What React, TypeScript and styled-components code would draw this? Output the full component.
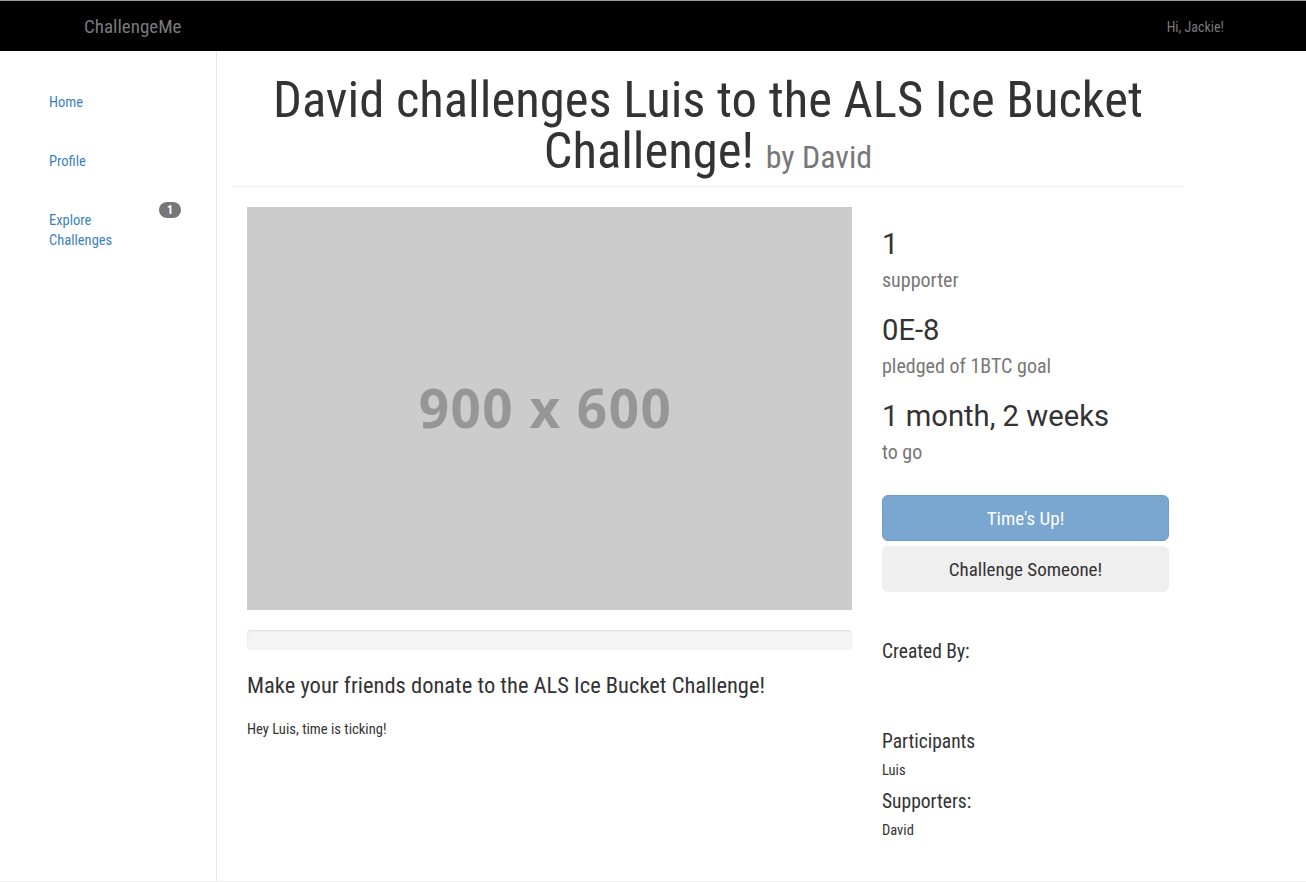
import React from "react";
import styled, { createGlobalStyle } from "styled-components";

const Global = createGlobalStyle`
  html, body { margin: 0; padding: 0; background: #fff; }
  body {
    font-family: "Roboto", "Liberation Sans", sans-serif;
    font-stretch: condensed;
    font-size: 14px;
    line-height: 20px;
    color: #333;
  }
  * { box-sizing: border-box; }
`;

const Navbar = styled.header`
  height: 51px;
  background: #000;
  border-top: 1px solid #9a9a9a;
  display: flex;
  align-items: center;
  justify-content: space-between;
  padding: 0 82px 0 84px;
`;

const Brand = styled.a`
  color: #7a7a7a;
  font-size: 19px;
  line-height: 20px;
  text-decoration: none;
  margin-top: 2px;
`;

const Greeting = styled.span`
  color: #7a7a7a;
  font-size: 14px;
  margin-top: 1px;
`;

const Body = styled.div`
  display: flex;
  height: 831px;
  border-bottom: 1px solid #eee;
`;

const Sidebar = styled.nav`
  width: 217px;
  flex-shrink: 0;
  border-right: 1px solid #e5e5e5;
  padding: 42px 35px 0 49px;
  display: flex;
  flex-direction: column;
`;

const NavItem = styled.a`
  display: flex;
  justify-content: space-between;
  align-items: flex-start;
  color: #3a7fc1;
  font-size: 14.5px;
  line-height: 20px;
  text-decoration: none;
  height: 59px;
`;

const NavLabel = styled.span`
  max-width: 100px;
`;

const Badge = styled.span`
  background: #777;
  color: #fff;
  font-weight: 700;
  font-size: 12px;
  line-height: 16px;
  min-width: 22px;
  height: 16px;
  border-radius: 10px;
  text-align: center;
  margin-top: -9px;
`;

const Main = styled.main`
  padding-left: 15px;
  width: 967px;
`;

const PageHeader = styled.div`
  margin-top: 23px;
  padding-bottom: 3px;
  border-bottom: 1px solid #eee;
  text-align: center;
`;

const Title = styled.h1`
  margin: 0;
  font-size: 50.7px;
  line-height: 51px;
  font-weight: 400;
  color: #333;
`;

const Byline = styled.small`
  font-size: 32px;
  color: #777;
`;

const Row = styled.div`
  display: flex;
  padding-top: 20px;
`;

const LeftCol = styled.section`
  width: 635px;
  padding: 0 15px;
`;

const RightCol = styled.aside`
  width: 317px;
  padding: 0 15px;
`;

const Placeholder = styled.div`
  height: 403px;
  background: #ccc;
  display: flex;
  align-items: center;
  justify-content: center;
  color: #969696;
  font-family: "Open Sans", sans-serif;
  font-stretch: 100%;
  font-weight: 700;
  font-size: 53px;
  letter-spacing: 1.5px;
  padding: 0 8px 2px 0;
`;

const Progress = styled.div`
  height: 20px;
  margin-top: 20px;
  background: #f5f5f5;
  border-radius: 4px;
  box-shadow: inset 0 1px 2px rgba(0, 0, 0, 0.1);
`;

const Lead = styled.h4`
  margin: 23px 0 0;
  font-size: 22.5px;
  line-height: 24px;
  font-weight: 400;
  color: #333;
`;

const Text = styled.p`
  margin: 22px 0 0;
  font-size: 14.6px;
  line-height: 20px;
`;

const Stat = styled.div`
  margin-bottom: 20px;
  &:first-child { margin-top: 19px; }
`;

const StatValue = styled.div`
  font-size: 29.2px;
  line-height: 36px;
  font-stretch: normal;
  color: #333;
`;

const StatLabel = styled.div`
  margin-top: 6px;
  font-size: 20px;
  line-height: 24px;
  color: #777;
`;

const Button = styled.button<{ $primary?: boolean }>`
  display: block;
  width: 100%;
  height: 46px;
  font-family: inherit;
  font-stretch: condensed;
  font-size: 19px;
  border-radius: 6px;
  border: 1px solid ${(p) => (p.$primary ? "#6d9dc9" : "#efefef")};
  background: ${(p) => (p.$primary ? "#7aa7d0" : "#efefef")};
  color: ${(p) => (p.$primary ? "#fff" : "#333")};
  margin-top: ${(p) => (p.$primary ? "31px" : "5px")};
  cursor: pointer;
`;

const SideHeading = styled.h5<{ $top: number }>`
  margin: ${(p) => p.$top}px 0 0;
  font-size: 19.5px;
  line-height: 24px;
  font-weight: 400;
  color: #333;
`;

const SideItem = styled.div`
  margin-top: 7px;
  font-size: 14.5px;
  line-height: 20px;
`;

export default function App() {
  return (
    <>
      <Global />
      <Navbar>
        <Brand href="#">ChallengeMe</Brand>
        <Greeting>Hi, Jackie!</Greeting>
      </Navbar>
      <Body>
        <Sidebar>
          <NavItem href="#"><NavLabel>Home</NavLabel></NavItem>
          <NavItem href="#"><NavLabel>Profile</NavLabel></NavItem>
          <NavItem href="#">
            <NavLabel>Explore Challenges</NavLabel>
            <Badge>1</Badge>
          </NavItem>
        </Sidebar>
        <Main>
          <PageHeader>
            <Title>
              David challenges Luis to the ALS Ice Bucket Challenge! <Byline>by David</Byline>
            </Title>
          </PageHeader>
          <Row>
            <LeftCol>
              <Placeholder>900 x 600</Placeholder>
              <Progress />
              <Lead>Make your friends donate to the ALS Ice Bucket Challenge!</Lead>
              <Text>Hey Luis, time is ticking!</Text>
            </LeftCol>
            <RightCol>
              <Stat>
                <StatValue>1</StatValue>
                <StatLabel>supporter</StatLabel>
              </Stat>
              <Stat>
                <StatValue>0E-8</StatValue>
                <StatLabel>pledged of 1BTC goal</StatLabel>
              </Stat>
              <Stat>
                <StatValue>1 month, 2 weeks</StatValue>
                <StatLabel>to go</StatLabel>
              </Stat>
              <Button $primary>Time's Up!</Button>
              <Button>Challenge Someone!</Button>
              <SideHeading $top={48}>Created By:</SideHeading>
              <SideHeading $top={66}>Participants</SideHeading>
              <SideItem>Luis</SideItem>
              <SideHeading $top={9}>Supporters:</SideHeading>
              <SideItem>David</SideItem>
            </RightCol>
          </Row>
        </Main>
      </Body>
    </>
  );
}
